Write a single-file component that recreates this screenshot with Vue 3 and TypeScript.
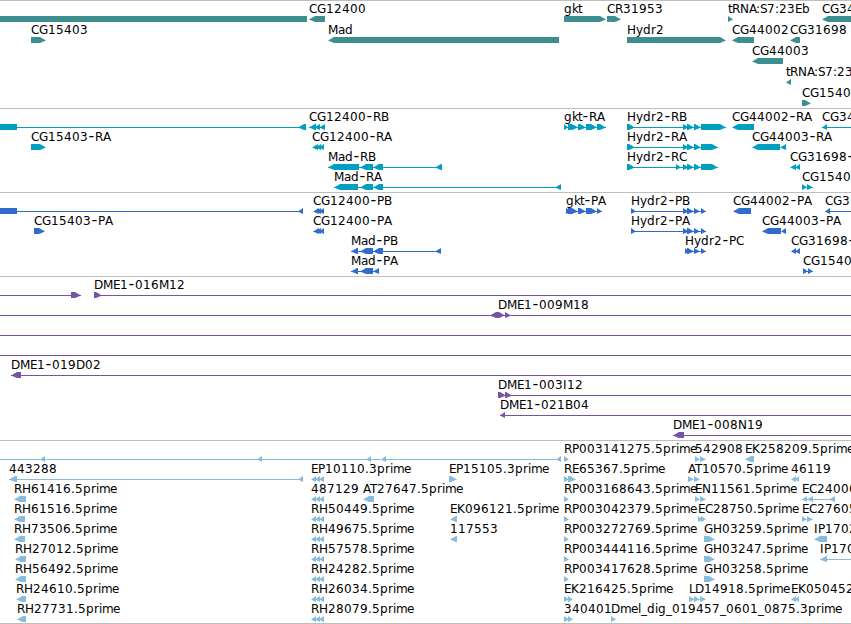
<template>
  <div class="browser">
    <section v-for="track in tracks" :key="track.name" class="track">
      <svg :class="['track-svg', track.name]" width="851" :height="track.height" :viewBox="`0 0 851 ${track.height}`">
        <g v-for="(f, i) in track.features" :key="i" :transform="`translate(0 ${f.row * track.pitch})`">
          <rect v-if="f.line" :x="f.line[0]" y="18" :width="f.line[1] - f.line[0]" height="1" />
          <polygon v-for="(p, j) in f.shapes" :key="j" :points="p" />
          <text v-if="f.label" class="label" :x="glyphX(f.label, f.x)" y="12"><tspan v-for="(s, k) in pieces(f.label)" :key="k" :class="{ dash: s === '-' }">{{ s }}</tspan></text>
        </g>
      </svg>
    </section>
  </div>
</template>

<script setup lang="ts">
// row, label, label x, parts ("from-to" plus < or > for the arrow side), connecting line
type Row = [number, string, number, string, string?]

interface Feature {
  row: number
  label: string
  x: number
  shapes: string[]
  line: number[] | null
}

interface Track {
  name: string
  height: number
  pitch: number
  features: Feature[]
}

const HEAD = 6

// integer advances, digits fall back to 8
const advances: Record<string, number> = {
  A: 7, B: 8, C: 8, D: 9, E: 7, G: 9, H: 9, I: 4, K: 8, L: 6, M: 10, N: 9, P: 7, R: 8, S: 7, T: 7,
  a: 7, b: 8, d: 8, e: 7, g: 8, i: 3, k: 6, l: 3, m: 11, p: 8, r: 5, t: 4, y: 7,
  '-': 7, '.': 4, ':': 4, _: 6,
}

function glyphX(label: string, start: number): string {
  let x = start
  return Array.from(label).map((ch) => {
    const at = ch === '-' ? x + 0.5 : x
    x += advances[ch] ?? 8
    return at
  }).join(' ')
}

// the dash gets its own span, it is set larger than the rest
function pieces(label: string): string[] {
  return label.split(/(-)/).filter(Boolean)
}

function shape(part: string): string {
  const m = part.match(/^(\d+)-(\d+)([<>]?)$/)
  if (!m) return ''
  const a = Number(m[1])
  const b = Number(m[2])
  const h = Math.min(HEAD, b - a)
  if (m[3] === '<') return `${a},18.5 ${a + h},15 ${b},15 ${b},21 ${a + h},21`
  if (m[3] === '>') return `${a},15 ${b - h},15 ${b},18.5 ${b - h},21 ${a},21`
  return `${a},15 ${b},15 ${b},21 ${a},21`
}

function build(name: string, height: number, pitch: number, rows: Row[]): Track {
  return {
    name,
    height,
    pitch,
    features: rows.map(([row, label, x, parts, line]) => ({
      row,
      label,
      x,
      shapes: parts.split(' ').filter(Boolean).map(shape),
      line: line ? line.split('-').map(Number) : null,
    })),
  }
}

const genes: Row[] = [
  [0, '', 0, '0-307'],
  [0, 'CG12400', 309, '309-325<'],
  [0, 'gkt', 564, '564-606>'],
  [0, 'CR31953', 607, '607-621>'],
  [0, 'tRNA:S7:23Eb', 728, '728-733>'],
  [0, 'CG34', 822, '822-860<'],
  [1, 'CG15403', 31, '31-46>'],
  [1, 'Mad', 328, '328-559<'],
  [1, 'Hydr2', 627, '627-726>'],
  [1, 'CG44002', 732, '732-754<'],
  [1, 'CG31698', 790, '790-800<'],
  [2, 'CG44003', 752, '752-783<'],
  [3, 'tRNA:S7:23', 786, '786-791<'],
  [4, 'CG1540', 802, '802-811>'],
]

const transcripts: Row[] = [
  [0, '', 0, '0-17 298-306<', '17-306'],
  [0, 'CG12400-RB', 309, '309-316< 314-320< 319-325<', '309-325'],
  [0, 'gkt-RA', 564, '564-568> 568-578> 578-586> 586-597> 597-606>', '564-606'],
  [0, 'Hydr2-RB', 627, '627-635> 683-689> 687-694> 694-701> 701-726>', '627-726'],
  [0, 'CG44002-RA', 732, '732-754<'],
  [0, 'CG34', 822, '822-827<', '822-851'],
  [1, 'CG15403-RA', 31, '31-46>'],
  [1, 'CG12400-RA', 312, '312-318< 316-321< 319-324<'],
  [1, 'Hydr2-RA', 627, '627-635> 683-689> 687-694> 694-701> 701-718>', '627-718'],
  [1, 'CG44003-RA', 752, '752-780< 780-786<'],
  [2, 'Mad-RB', 328, '328-359< 360-373< 373-383< 435-442<', '328-442'],
  [2, 'Hydr2-RC', 627, '627-635> 676-681> 683-689> 687-694> 694-701> 701-718>', '627-718'],
  [2, 'CG31698-', 790, '790-796< 795-800<'],
  [3, 'Mad-RA', 334, '334-358< 360-373< 373-383< 555-561<', '334-561'],
  [3, 'CG1540', 802, '802-807> 807-813>', '802-813'],
]

const proteins: Row[] = [
  [0, '', 0, '0-17 298-303<', '17-303'],
  [0, 'CG12400-PB', 313, '313-319< 316-321< 319-324<'],
  [0, 'gkt-PA', 566, '566-572> 568-578> 578-586> 586-597> 597-602>', '566-602'],
  [0, 'Hydr2-PB', 631, '631-636> 683-689> 687-694> 694-700> 701-706>', '631-706'],
  [0, 'CG44002-PA', 733, '733-751<'],
  [0, 'CG3', 825, '825-830<', '825-851'],
  [1, 'CG15403-PA', 34, '34-45>'],
  [1, 'CG12400-PA', 313, '313-319< 316-321< 319-324<'],
  [1, 'Hydr2-PA', 631, '631-636> 683-689> 687-694> 694-700> 701-706>', '631-706'],
  [1, 'CG44003-PA', 762, '762-781< 781-786<'],
  [2, 'Mad-PB', 351, '351-358< 360-373< 373-383< 435-441<', '351-441'],
  [2, 'Hydr2-PC', 685, '685-689> 687-694> 694-700> 701-706>', '685-706'],
  [2, 'CG31698-', 791, '791-796< 795-800<'],
  [3, 'Mad-PA', 351, '351-358< 360-373< 373-379<', '351-379'],
  [3, 'CG1540', 803, '803-808> 808-813>', '803-813'],
]

const bacs: Row[] = [
  [0, '', 0, '71-81>', '0-81'],
  [0, 'DME1-016M12', 94, '94-102>', '94-851'],
  [1, 'DME1-009M18', 498, '490-499< 498-505> 505-511>', '0-851'],
  [2, '', 0, '', '0-851'],
  [3, '', 0, '', '0-851'],
  [4, 'DME1-019D02', 11, '11-21<', '11-851'],
  [5, 'DME1-003I12', 498, '498-506> 505-512>', '498-851'],
  [6, 'DME1-021B04', 500, '500-505<', '500-851'],
  [7, 'DME1-008N19', 673, '673-684<', '673-851'],
]

const ests: Row[] = [
  [0, '', 0, '40-45< 257-262< 366-371< 381-386< 556-561<', '0-561'],
  [0, 'RP003141275.5prime', 564, '564-569>'],
  [0, '542908', 695, '695-700> 700-706>'],
  [0, 'EK258209.5prime', 745, '745-754<'],
  [1, '443288', 9, '9-17< 298-303<', '9-303'],
  [1, 'EP10110.3prime', 311, '311-316< 315-320< 319-324<'],
  [1, 'EP15105.3prime', 449, '449-457>'],
  [1, 'RE65367.5prime', 564, '564-569> 568-576>'],
  [1, 'AT10570.5prime', 688, '688-694> 694-700>'],
  [1, '46119', 791, '791-796< 795-799<'],
  [2, 'RH61416.5prime', 14, '14-26<'],
  [2, '487129', 311, '311-316< 315-320< 319-324<'],
  [2, 'AT27647.5prime', 363, '363-374<'],
  [2, 'RP003168643.5prime', 564, '564-569>'],
  [2, 'EN11561.5prime', 695, '695-700> 700-706>'],
  [2, 'EC24006', 802, '802-807< 807-813< 829-835<', '802-835'],
  [3, 'RH61516.5prime', 14, '14-25<'],
  [3, 'RH50449.5prime', 311, '311-316< 315-320< 319-324<'],
  [3, 'EK096121.5prime', 450, '450-457<'],
  [3, 'RP003042379.5prime', 564, '564-569>'],
  [3, 'EC28750.5prime', 698, '698-703> 701-706>'],
  [3, 'EC27605', 802, '802-807> 807-813>'],
  [4, 'RH73506.5prime', 14, '14-25<'],
  [4, 'RH49675.5prime', 311, '311-316< 315-320< 319-324<'],
  [4, '117553', 450, '450-457<'],
  [4, 'RP003272769.5prime', 564, '564-569>'],
  [4, 'GH03259.5prime', 704, '704-715>'],
  [4, 'IP1702', 814, '814-827<'],
  [5, 'RH27012.5prime', 15, '15-26<'],
  [5, 'RH57578.5prime', 311, '311-316< 315-320< 319-324<'],
  [5, 'RP003444116.5prime', 564, '564-569>'],
  [5, 'GH03247.5prime', 704, '704-715>'],
  [5, 'IP170', 820, '820-827<', '820-851'],
  [6, 'RH56492.5prime', 15, '15-26<'],
  [6, 'RH24282.5prime', 311, '311-316< 315-320< 319-324<'],
  [6, 'RP003417628.5prime', 564, '564-569>'],
  [6, 'GH03258.5prime', 704, '704-715>'],
  [7, 'RH24610.5prime', 16, '16-26<'],
  [7, 'RH26034.5prime', 311, '311-316< 315-320< 319-324<'],
  [7, 'EK216425.5prime', 564, '564-569> 568-573>'],
  [7, 'LD14918.5prime', 689, '689-695> 694-700> 700-706>'],
  [7, 'EK050452', 791, '791-796< 795-799<'],
  [8, 'RH27731.5prime', 17, '17-26<'],
  [8, 'RH28079.5prime', 311, '311-316< 315-320< 319-324<'],
  [8, '340401', 564, '564-569> 568-573>'],
  [8, 'Dmel_dig_019457_0601_0875.3prime', 611, '611-616>'],
]

const tracks: Track[] = [
  build('gene', 107, 21, genes),
  build('transcript', 83, 20, transcripts),
  build('protein', 83, 20, proteins),
  build('bac', 163, 20, bacs),
  build('est', 182, 20, ests),
]
</script>

<style>
body {
  margin: 0;
  background: #fff;
}
</style>

<style scoped>
.browser {
  width: 851px;
  height: 624px;
  box-sizing: border-box;
  overflow: hidden;
  background: #fff;
  border-bottom: 1px solid #bebebe;
}
.track {
  border-top: 1px solid #bebebe;
}
.track-svg {
  display: block;
  overflow: hidden;
}
.gene {
  fill: #3d8e91;
}
.transcript {
  fill: #009fc0;
}
.protein {
  fill: #306bce;
}
.bac {
  fill: #7653a6;
}
.est {
  fill: #88bcdd;
}
.label {
  fill: #000;
  font-family: "DejaVu Sans", sans-serif;
  font-size: 12px;
}
.dash {
  font-size: 16px;
}
</style>
